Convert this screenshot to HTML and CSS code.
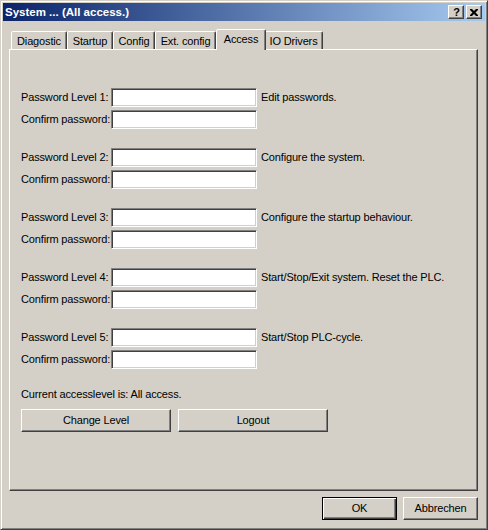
FILE: index.html
```html
<!DOCTYPE html>
<html>
<head>
<meta charset="utf-8">
<link rel="stylesheet" href="styles.css">
</head>
<body>
<div class="window">
  <div class="titlebar">
    <span class="title">System ... (All access.)</span>
    <div class="caps">
      <div class="cap cap-help">?</div>
      <div class="cap"><svg width="8" height="7" viewBox="0 0 8 7"><path d="M0 0h2l2 2 2-2h2v1l-2.5 2.5L8 6v1H6L4 5 2 7H0V6l2.5-2.5L0 1z" fill="#000"/></svg></div>
    </div>
  </div>
  <div class="body">
    <div class="tabs">
      <div class="tab t-diag">Diagostic</div>
      <div class="tab t-start">Startup</div>
      <div class="tab t-conf">Config</div>
      <div class="tab t-ext">Ext. config</div>
      <div class="tab t-access active">Access</div>
      <div class="tab t-io">IO Drivers</div>
    </div>
    <div class="panel">
      <div class="groups">
        <div class="group">
          <div class="row"><label class="lbl">Password Level 1:</label><input class="field" type="password"><span class="desc">Edit passwords.</span></div>
          <div class="row"><label class="lbl">Confirm password:</label><input class="field" type="password"></div>
        </div>
        <div class="group">
          <div class="row"><label class="lbl">Password Level 2:</label><input class="field" type="password"><span class="desc">Configure the system.</span></div>
          <div class="row"><label class="lbl">Confirm password:</label><input class="field" type="password"></div>
        </div>
        <div class="group">
          <div class="row"><label class="lbl">Password Level 3:</label><input class="field" type="password"><span class="desc">Configure the startup behaviour.</span></div>
          <div class="row"><label class="lbl">Confirm password:</label><input class="field" type="password"></div>
        </div>
        <div class="group">
          <div class="row"><label class="lbl">Password Level 4:</label><input class="field" type="password"><span class="desc">Start/Stop/Exit system. Reset the PLC.</span></div>
          <div class="row"><label class="lbl">Confirm password:</label><input class="field" type="password"></div>
        </div>
        <div class="group">
          <div class="row"><label class="lbl">Password Level 5:</label><input class="field" type="password"><span class="desc">Start/Stop PLC-cycle.</span></div>
          <div class="row"><label class="lbl">Confirm password:</label><input class="field" type="password"></div>
        </div>
      </div>
      <p class="status">Current accesslevel is: All access.</p>
      <div class="actions">
        <button class="btn wide">Change Level</button>
        <button class="btn wide">Logout</button>
      </div>
    </div>
    <div class="footer">
      <button class="btn dlg default">OK</button>
      <button class="btn dlg">Abbrechen</button>
    </div>
  </div>
</div>
</body>
</html>
```
FILE: styles.css
```css
body {
  margin: 0;
  background: #d4d0c8;
  font: 11px/13px "Liberation Sans", Arial, sans-serif;
  letter-spacing: -0.15px;
  color: #000;
}

.window {
  width: 488px;
  height: 530px;
  box-sizing: border-box;
  border: 1px solid;
  border-color: #d4d0c8 #404040 #404040 #d4d0c8;
  box-shadow: inset 1px 1px #fff, inset -1px -1px #808080;
  padding: 2px;
  display: flex;
  flex-direction: column;
  background: #d4d0c8;
}

.titlebar {
  height: 18px;
  flex: none;
  display: flex;
  align-items: center;
  padding: 0 3px 0 2px;
  background: linear-gradient(to right, #0a246a, #a6caf0);
}

.title {
  flex: 1;
  color: #fff;
  font-weight: bold;
  font-size: 11.5px;
  letter-spacing: 0;
  white-space: nowrap;
}

.caps {
  display: flex;
  gap: 2px;
}

.cap {
  width: 16px;
  height: 14px;
  box-sizing: border-box;
  border: 1px solid;
  border-color: #fff #404040 #404040 #fff;
  box-shadow: inset -1px -1px #808080;
  background: #d4d0c8;
  display: flex;
  align-items: center;
  justify-content: center;
}

.cap-help {
  font-weight: bold;
  font-size: 11px;
  line-height: 12px;
  letter-spacing: 0;
  padding-left: 1px;
}

.body {
  flex: 1;
  display: flex;
  flex-direction: column;
  padding: 8px 7px 0 6px;
}

.tabs {
  height: 20px;
  display: flex;
  align-items: flex-end;
  padding-left: 2px;
  position: relative;
  z-index: 1;
}

.tab {
  box-sizing: border-box;
  height: 18px;
  border: 1px solid;
  border-bottom: none;
  border-color: #fff #404040 transparent #fff;
  box-shadow: inset -1px 0 #808080;
  border-radius: 2px 2px 0 0;
  text-align: center;
  padding-top: 3px;
  background: #d4d0c8;
  white-space: nowrap;
}

.t-diag { width: 56px; }
.t-start { width: 46px; }
.t-conf { width: 42px; }
.t-ext { width: 61px; }
.t-access { width: 50px; }
.t-io { width: 59px; }

.tab.active {
  height: 21px;
  margin-bottom: -1px;
  margin-right: -2px;
  position: relative;
  z-index: 2;
}

.panel {
  height: 442px;
  box-sizing: border-box;
  border: 1px solid;
  border-color: #fff #404040 #404040 #fff;
  box-shadow: inset -1px -1px #808080;
  padding: 38px 0 0 11px;
}

.groups {
  display: flex;
  flex-direction: column;
  gap: 19px;
}

.group {
  display: flex;
  flex-direction: column;
  gap: 3px;
}

.row {
  display: flex;
  align-items: center;
  height: 19px;
}

.lbl {
  width: 90px;
  flex: none;
  white-space: nowrap;
}

.field {
  width: 146px;
  height: 19px;
  box-sizing: border-box;
  border: 1px solid;
  border-color: #808080 #fff #fff #808080;
  box-shadow: inset 1px 1px #404040, inset -1px -1px #d4d0c8;
  background: #fff;
  padding: 0;
  margin: 0;
  outline: none;
  flex: none;
}

.desc {
  padding-left: 4px;
  white-space: nowrap;
}

.status {
  margin: 19px 0 0;
}

.actions {
  display: flex;
  gap: 7px;
  margin-top: 8px;
}

.btn {
  box-sizing: border-box;
  height: 23px;
  border: 1px solid;
  border-color: #fff #404040 #404040 #fff;
  box-shadow: inset -1px -1px #808080;
  background: #d4d0c8;
  font: inherit;
  letter-spacing: inherit;
  color: #000;
  padding: 0;
  margin: 0;
}

.btn.wide {
  width: 150px;
}

.footer {
  display: flex;
  justify-content: flex-end;
  gap: 6px;
  margin-top: 6px;
}

.btn.dlg {
  width: 75px;
}

.btn.default {
  border-color: #000;
  box-shadow: inset 1px 1px #fff, inset -1px -1px #404040, inset -2px -2px #808080;
}
```
